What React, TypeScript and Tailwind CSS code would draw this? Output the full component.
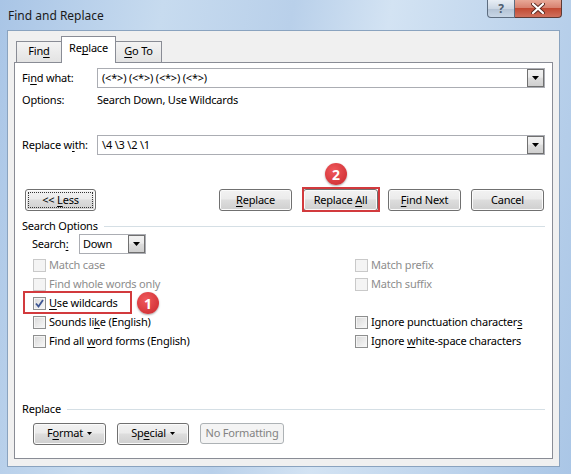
import type { ReactNode } from "react";

// Win7-style "Find and Replace" dialog (Word), annotated with red callouts.

const BTN =
  "flex h-[22px] items-center justify-center rounded-[3px] border border-[#707070] bg-[linear-gradient(#f2f2f2_0%,#ebebeb_45%,#dddddd_50%,#cfcfcf_100%)] shadow-[inset_0_0_0_1px_#fbfbfb] text-[11px] text-black";

function U({ children }: { children: ReactNode }) {
  return <span className="underline underline-offset-[2px] decoration-[1px]">{children}</span>;
}

function Check({ checked = false, disabled = false }: { checked?: boolean; disabled?: boolean }) {
  return (
    <span
      className={`box-border flex h-[13px] w-[13px] shrink-0 items-center justify-center border ${
        disabled
          ? "border-[#c9c9c9] bg-[#f4f4f4]"
          : "border-[#8e8f8f] bg-[linear-gradient(135deg,#d8d8d8,#f9f9f9)] shadow-[inset_0_0_0_1px_#f4f4f4]"
      }`}
    >
      {checked ? (
        <svg width="11" height="11" viewBox="0 0 11 11">
          <path d="M2 5.5 L4.5 8.5 L9 2" fill="none" stroke="#3d5592" strokeWidth="1.8" />
        </svg>
      ) : null}
    </span>
  );
}

function Option({
  label,
  checked,
  disabled,
}: {
  label: ReactNode;
  checked?: boolean;
  disabled?: boolean;
}) {
  return (
    <div className="flex h-[19px] items-center gap-[3px]">
      <Check checked={checked} disabled={disabled} />
      <span className={disabled ? "text-[#8d8d8d]" : "text-black"}>{label}</span>
    </div>
  );
}

function DropArrow() {
  return (
    <span className="flex h-full w-[17px] items-center justify-center border border-[#707070] bg-[linear-gradient(#f2f2f2_0%,#ebebeb_45%,#dddddd_50%,#cfcfcf_100%)]">
      <svg width="7" height="4" viewBox="0 0 7 4">
        <path d="M0 0 H7 L3.5 4 Z" fill="#000" />
      </svg>
    </span>
  );
}

function Combo({ value }: { value: string }) {
  return (
    <div className="flex h-[20px] flex-1 items-center border border-[#abadb3] bg-white pl-[4px]">
      <span className="flex-1">{value}</span>
      <span className="h-[18px] py-0">
        <DropArrow />
      </span>
    </div>
  );
}

function Badge({ n, className }: { n: string; className: string }) {
  return (
    <span
      className={`absolute flex h-[22px] w-[22px] items-center justify-center rounded-full bg-[radial-gradient(circle_at_40%_35%,#f0595c,#c9272c)] text-[14px] font-bold text-white shadow-[0_1px_2px_rgba(0,0,0,0.35)] ${className}`}
    >
      {n}
    </span>
  );
}

function Section({ title, lineClass }: { title: string; lineClass: string }) {
  return (
    <div className="flex h-[16px] items-center">
      <span>{title}</span>
      <span className={`h-px flex-1 bg-[#d5dfe5] ${lineClass}`} />
    </div>
  );
}

export default function App() {
  return (
    <div className="relative h-[474px] w-[571px] overflow-hidden bg-[linear-gradient(100deg,#a9c5e6_0%,#c7dbef_25%,#b9d0ea_45%,#d3e3f3_60%,#aac6e6_100%)] font-['Noto_Sans','Open_Sans',sans-serif] text-[11px] tracking-[-0.2px] text-black">
      {/* title bar */}
      <div className="flex h-[30px] items-start">
        <span className="mt-[7px] ml-[8px] text-[12px] tracking-normal text-[#1a1a1a]">Find and Replace</span>
        <div className="ml-auto mr-[9px] flex">
          <span className="flex h-[18px] w-[28px] items-center justify-center rounded-bl-[4px] border border-t-0 border-[#5d6d80] bg-[linear-gradient(#e8eef5_0%,#ccd7e4_50%,#b3c2d4_51%,#c8d6e6_100%)] text-[12px] font-bold text-[#4d5d70]">
            ?
          </span>
          <span className="flex h-[18px] w-[47px] items-center justify-center rounded-br-[4px] border border-l-0 border-t-0 border-[#5d3a35] bg-[linear-gradient(#e8a897_0%,#d88270_45%,#c24a33_50%,#d0705c_100%)]">
            <svg width="14" height="11" viewBox="0 0 14 11">
              <path d="M2 1 L12 10 M12 1 L2 10" stroke="#5a2a22" strokeWidth="4" strokeLinecap="round" />
              <path d="M2 1 L12 10 M12 1 L2 10" stroke="#fff" strokeWidth="2.2" strokeLinecap="round" />
            </svg>
          </span>
        </div>
      </div>

      {/* dialog body */}
      <div className="ml-[7px] flex h-[437px] w-[553px] flex-col border border-[#8aa3bf] bg-[#f0f0f0] px-[6px] pb-[7px] pt-[5px]">
        {/* tabs */}
        <div className="relative z-10 flex h-[26px] items-end pl-[2px]">
          <span className="flex h-[21px] w-[46px] items-center justify-center border border-b-0 border-[#898c95] bg-[linear-gradient(#f3f3f3,#e3e3e3)] pb-[1px]">
            <span>
              Fin<U>d</U>
            </span>
          </span>
          <span className="-mb-px -ml-px flex h-[27px] w-[55px] items-center justify-center border border-b-0 border-[#898c95] bg-white pb-[3px]">
            <span>
              Re<U>p</U>lace
            </span>
          </span>
          <span className="-ml-px flex h-[21px] w-[47px] items-center justify-center border border-b-0 border-[#898c95] bg-[linear-gradient(#f3f3f3,#e3e3e3)] pb-[1px]">
            <span>
              <U>G</U>o To
            </span>
          </span>
        </div>

        {/* tab page */}
        <div className="flex flex-1 flex-col border border-[#898c95] bg-white px-[7px] pt-[5px]">
          <div className="flex h-[20px] items-center">
            <span className="w-[75px]">
              Fi<U>n</U>d what:
            </span>
            <Combo value="(<*>) (<*>) (<*>) (<*>)" />
          </div>
          <div className="mt-[2px] flex h-[20px] items-center">
            <span className="w-[75px]">Options:</span>
            <span>Search Down, Use Wildcards</span>
          </div>
          <div className="mt-[25px] flex h-[20px] items-center">
            <span className="w-[75px]">
              Replace w<U>i</U>th:
            </span>
            <Combo value="\4 \3 \2 \1" />
          </div>

          {/* button row */}
          <div className="mt-[34px] flex h-[22px] items-center">
            <span className={`${BTN} ml-[3px] w-[71px] border-[#3c7fb1] p-[2px]`}>
              <span className="flex h-full w-full items-center justify-center border border-dotted border-[#333]">
                <span>
                  &lt;&lt; <U>L</U>ess
                </span>
              </span>
            </span>
            <span className={`${BTN} ml-auto w-[73px]`}>
              <span>
                <U>R</U>eplace
              </span>
            </span>
            <span
              className={`${BTN} ml-[11px] w-[75px] border-[#3c7fb1] bg-[linear-gradient(#eaf6fd_0%,#d9f0fc_45%,#bee6fd_50%,#a7d9f5_100%)]`}
            >
              <span>
                Replace <U>A</U>ll
              </span>
            </span>
            <span className={`${BTN} ml-[10px] w-[73px]`}>
              <span>
                <U>F</U>ind Next
              </span>
            </span>
            <span className={`${BTN} ml-[10px] mr-[1px] w-[73px]`}>Cancel</span>
          </div>

          <div className="mt-[7px]">
            <Section title="Search Options" lineClass="ml-[6px]" />
          </div>

          <div className="flex h-[20px] items-center pl-[10px]">
            <span className="w-[47px]">
              Search<U>:</U>
            </span>
            <div className="flex h-[20px] w-[67px] items-center border border-[#abadb3] bg-white pl-[3px]">
              <span className="flex-1">Down</span>
              <span className="h-[18px]">
                <DropArrow />
              </span>
            </div>
          </div>

          <div className="mt-[2px] grid grid-cols-[322px_1fr] pl-[11px]">
            <Option label="Match case" disabled />
            <Option label="Match prefix" disabled />
            <Option label="Find whole words only" disabled />
            <Option label="Match suffix" disabled />
            <Option
              checked
              label={
                <>
                  <U>U</U>se wildcards
                </>
              }
            />
            <div className="h-[19px]" />
            <Option
              label={
                <>
                  Sounds li<U>k</U>e (English)
                </>
              }
            />
            <Option
              label={
                <>
                  Ignore punctuation character<U>s</U>
                </>
              }
            />
            <Option
              label={
                <>
                  Find all <U>w</U>ord forms (English)
                </>
              }
            />
            <Option
              label={
                <>
                  Ignore <U>w</U>hite-space characters
                </>
              }
            />
          </div>

          <div className="mt-[50px]">
            <Section title="Replace" lineClass="ml-[6px]" />
          </div>

          <div className="mt-[6px] flex h-[21px] items-center">
            <span className={`${BTN} ml-[11px] h-[21px] w-[73px] gap-[4px]`}>
              <span>
                F<U>o</U>rmat
              </span>
              <svg width="5" height="3" viewBox="0 0 5 3">
                <path d="M0 0 H5 L2.5 3 Z" fill="#000" />
              </svg>
            </span>
            <span className={`${BTN} ml-[11px] h-[21px] w-[72px] gap-[4px]`}>
              <span>
                Sp<U>e</U>cial
              </span>
              <svg width="5" height="3" viewBox="0 0 5 3">
                <path d="M0 0 H5 L2.5 3 Z" fill="#000" />
              </svg>
            </span>
            <span className="ml-[11px] flex h-[21px] w-[84px] items-center justify-center rounded-[3px] border border-[#adb2b5] bg-[#f4f4f4] text-[#838383]">
              No Formatting
            </span>
          </div>
        </div>
      </div>

      {/* callouts */}
      <span className="absolute left-[302px] top-[187px] h-[25px] w-[78px] border-2 border-[#d23a3d]" />
      <span className="absolute left-[23px] top-[291px] h-[23px] w-[109px] border-2 border-[#d23a3d]" />
      <Badge n="2" className="left-[325px] top-[163px]" />
      <Badge n="1" className="left-[137px] top-[292px]" />
    </div>
  );
}
